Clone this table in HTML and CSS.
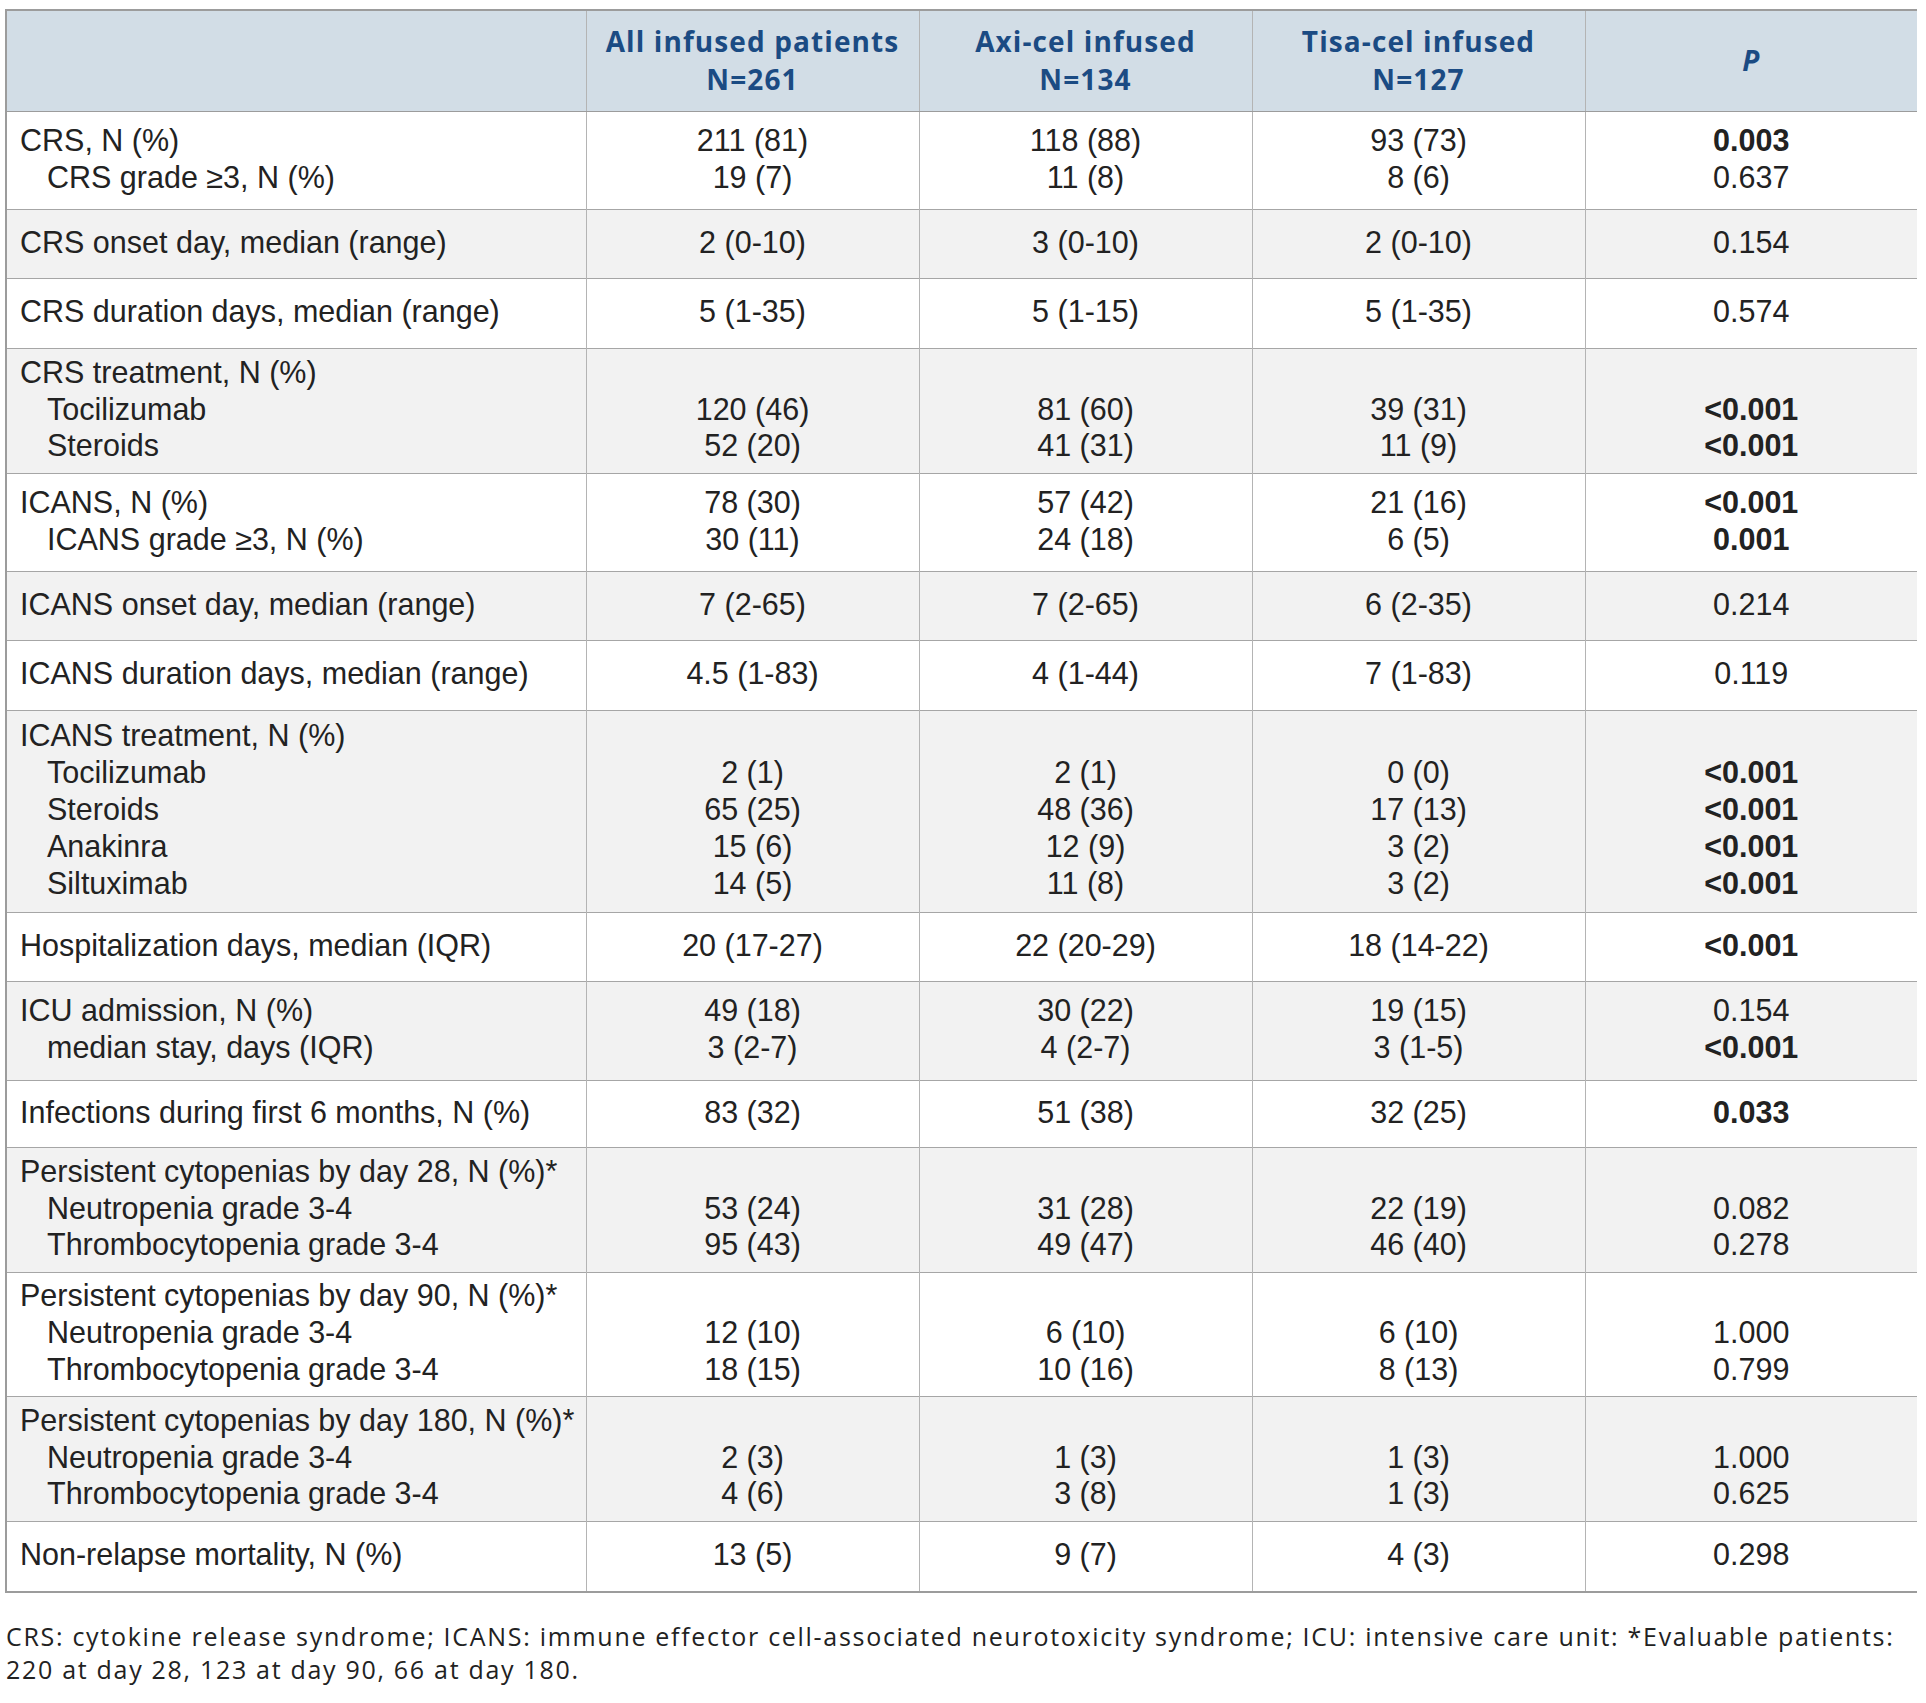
FILE: index.html
```html
<!DOCTYPE html>
<html lang="en">
<head>
<meta charset="utf-8">
<title>CAR-T toxicity table</title>
<link rel="stylesheet" href="styles.css">
</head>
<body>
<table class="tox">
  <colgroup>
    <col class="c-label"><col class="c-val"><col class="c-val"><col class="c-val"><col class="c-p">
  </colgroup>
  <thead>
    <tr>
      <th></th>
      <th>All infused patients<br>N=261</th>
      <th>Axi-cel infused<br>N=134</th>
      <th>Tisa-cel infused<br>N=127</th>
      <th><i>P</i></th>
    </tr>
  </thead>
  <tbody>
    <tr class="r2">
      <td>CRS, N (%)<br><span class="ind">CRS grade ≥3, N (%)</span></td>
      <td>211 (81)<br>19 (7)</td>
      <td>118 (88)<br>11 (8)</td>
      <td>93 (73)<br>8 (6)</td>
      <td><b>0.003</b><br>0.637</td>
    </tr>
    <tr class="r1">
      <td>CRS onset day, median (range)</td>
      <td>2 (0-10)</td><td>3 (0-10)</td><td>2 (0-10)</td><td>0.154</td>
    </tr>
    <tr class="r1b">
      <td>CRS duration days, median (range)</td>
      <td>5 (1-35)</td><td>5 (1-15)</td><td>5 (1-35)</td><td>0.574</td>
    </tr>
    <tr class="r3">
      <td>CRS treatment, N (%)<br><span class="ind">Tocilizumab</span><br><span class="ind">Steroids</span></td>
      <td>&nbsp;<br>120 (46)<br>52 (20)</td>
      <td>&nbsp;<br>81 (60)<br>41 (31)</td>
      <td>&nbsp;<br>39 (31)<br>11 (9)</td>
      <td>&nbsp;<br><b>&lt;0.001</b><br><b>&lt;0.001</b></td>
    </tr>
    <tr class="r2">
      <td>ICANS, N (%)<br><span class="ind">ICANS grade ≥3, N (%)</span></td>
      <td>78 (30)<br>30 (11)</td>
      <td>57 (42)<br>24 (18)</td>
      <td>21 (16)<br>6 (5)</td>
      <td><b>&lt;0.001</b><br><b>0.001</b></td>
    </tr>
    <tr class="r1">
      <td>ICANS onset day, median (range)</td>
      <td>7 (2-65)</td><td>7 (2-65)</td><td>6 (2-35)</td><td>0.214</td>
    </tr>
    <tr class="r1b">
      <td>ICANS duration days, median (range)</td>
      <td>4.5 (1-83)</td><td>4 (1-44)</td><td>7 (1-83)</td><td>0.119</td>
    </tr>
    <tr class="r5">
      <td>ICANS treatment, N (%)<br><span class="ind">Tocilizumab</span><br><span class="ind">Steroids</span><br><span class="ind">Anakinra</span><br><span class="ind">Siltuximab</span></td>
      <td>&nbsp;<br>2 (1)<br>65 (25)<br>15 (6)<br>14 (5)</td>
      <td>&nbsp;<br>2 (1)<br>48 (36)<br>12 (9)<br>11 (8)</td>
      <td>&nbsp;<br>0 (0)<br>17 (13)<br>3 (2)<br>3 (2)</td>
      <td>&nbsp;<br><b>&lt;0.001</b><br><b>&lt;0.001</b><br><b>&lt;0.001</b><br><b>&lt;0.001</b></td>
    </tr>
    <tr class="r1">
      <td>Hospitalization days, median (IQR)</td>
      <td>20 (17-27)</td><td>22 (20-29)</td><td>18 (14-22)</td><td><b>&lt;0.001</b></td>
    </tr>
    <tr class="r2b">
      <td>ICU admission, N (%)<br><span class="ind">median stay, days (IQR)</span></td>
      <td>49 (18)<br>3 (2-7)</td>
      <td>30 (22)<br>4 (2-7)</td>
      <td>19 (15)<br>3 (1-5)</td>
      <td>0.154<br><b>&lt;0.001</b></td>
    </tr>
    <tr class="r1c">
      <td>Infections during first 6 months, N (%)</td>
      <td>83 (32)</td><td>51 (38)</td><td>32 (25)</td><td><b>0.033</b></td>
    </tr>
    <tr class="r3">
      <td>Persistent cytopenias by day 28, N (%)*<br><span class="ind">Neutropenia grade 3-4</span><br><span class="ind">Thrombocytopenia grade 3-4</span></td>
      <td>&nbsp;<br>53 (24)<br>95 (43)</td>
      <td>&nbsp;<br>31 (28)<br>49 (47)</td>
      <td>&nbsp;<br>22 (19)<br>46 (40)</td>
      <td>&nbsp;<br>0.082<br>0.278</td>
    </tr>
    <tr class="r3b">
      <td>Persistent cytopenias by day 90, N (%)*<br><span class="ind">Neutropenia grade 3-4</span><br><span class="ind">Thrombocytopenia grade 3-4</span></td>
      <td>&nbsp;<br>12 (10)<br>18 (15)</td>
      <td>&nbsp;<br>6 (10)<br>10 (16)</td>
      <td>&nbsp;<br>6 (10)<br>8 (13)</td>
      <td>&nbsp;<br>1.000<br>0.799</td>
    </tr>
    <tr class="r3">
      <td>Persistent cytopenias by day 180, N (%)*<br><span class="ind">Neutropenia grade 3-4</span><br><span class="ind">Thrombocytopenia grade 3-4</span></td>
      <td>&nbsp;<br>2 (3)<br>4 (6)</td>
      <td>&nbsp;<br>1 (3)<br>3 (8)</td>
      <td>&nbsp;<br>1 (3)<br>1 (3)</td>
      <td>&nbsp;<br>1.000<br>0.625</td>
    </tr>
    <tr class="r1b">
      <td>Non-relapse mortality, N (%)</td>
      <td>13 (5)</td><td>9 (7)</td><td>4 (3)</td><td>0.298</td>
    </tr>
  </tbody>
</table>
<p class="note">CRS: cytokine release syndrome; ICANS: immune effector cell-associated neurotoxicity syndrome; ICU: intensive care unit: *Evaluable patients: 220 at day 28, 123 at day 90, 66 at day 180.</p>
</body>
</html>
```
FILE: styles.css
```css
html, body {
  background: #ffffff;
}
body {
  margin: 9px 9px 0 5px;
  font-family: "Liberation Sans", Arial, sans-serif;
  color: #222222;
}
.tox {
  width: 1912px;
  border-collapse: collapse;
  table-layout: fixed;
  font-family: "Liberation Sans", Arial, sans-serif;
  font-size: 30.5px;
  line-height: 36.85px;
  border: 2px solid #9c9c9c;
}
.c-label { width: 580px; }
.c-val { width: 333px; }
.c-p { width: 333px; }

.tox th {
  background: #d2dde6;
  color: #1b4b83;
  font-family: "Open Sans", "Liberation Sans", sans-serif;
  font-weight: 700;
  font-size: 28px;
  letter-spacing: 1.1px;
  line-height: 38px;
  height: 98px;
  padding: 0 0 2px 0;
  text-align: center;
  vertical-align: middle;
  border-left: 1px solid #b4b4b4;
  border-bottom: 1px solid #9c9c9c;
}
.tox th i {
  font-style: italic;
}
.tox td {
  padding: 0 0 4px 0;
  text-align: center;
  vertical-align: middle;
  border-left: 1px solid #b4b4b4;
  border-top: 1px solid #a6a6a6;
}
.tox td:first-child {
  text-align: left;
  padding-left: 13px;
}
.tox tbody tr:nth-child(even) td {
  background: #f2f2f2;
}
.tox b {
  font-weight: 700;
}
.ind {
  padding-left: 27px;
}
.r1 td { height: 64px; }
.r1b td { height: 65px; }
.r1c td { height: 62px; }
.r2 td { height: 93px; }
.r2b td { height: 94px; }
.r3 td { height: 120px; }
.r3b td { height: 119px; }
.r5 td { height: 197px; }

.note {
  margin: 27px 0 0 1px;
  font-family: "Open Sans", "Liberation Sans", sans-serif;
  font-size: 25px;
  letter-spacing: 1.7px;
  line-height: 33px;
  color: #222222;
}
```
